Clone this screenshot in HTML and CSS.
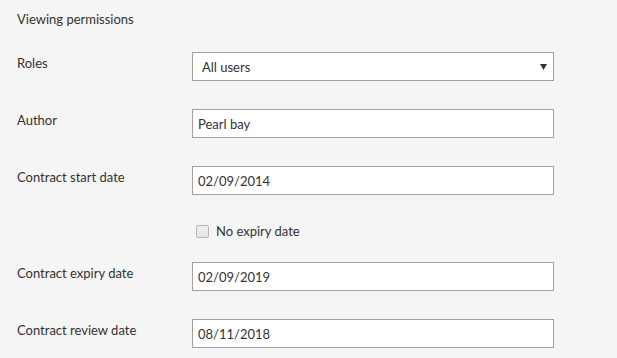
FILE: index.html
```html
<!DOCTYPE html>
<html lang="en">
<head>
    <meta charset="UTF-8">
    <meta name="viewport" content="width=device-width, initial-scale=1.0">
    <title>Viewing permissions</title>
    <link rel="stylesheet" href="styles.css">
</head>
<body>

<main class="panel">
    <h2 class="panel-title">Viewing permissions</h2>

    <form class="perm-form">
        <div class="form-row">
            <label for="roles">Roles</label>
            <div class="select-wrap">
                <select id="roles">
                    <option>All users</option>
                    <option>Admins</option>
                </select>
                <svg class="select-arrow" width="7" height="6" viewBox="0 0 7 6"><path d="M0 0H7L3.5 6Z" fill="#333"/></svg>
            </div>
        </div>

        <div class="form-row">
            <label for="author">Author</label>
            <input type="text" id="author" value="Pearl bay">
        </div>

        <div class="form-row">
            <label for="start">Contract start date</label>
            <input type="text" id="start" value="02/09/2014">
        </div>

        <div class="check-row">
            <input type="checkbox" id="noExpiry">
            <label for="noExpiry">No expiry date</label>
        </div>

        <div class="form-row">
            <label for="expiry">Contract expiry date</label>
            <input type="text" id="expiry" value="02/09/2019">
        </div>

        <div class="form-row">
            <label for="review">Contract review date</label>
            <input type="text" id="review" value="08/11/2018">
        </div>
    </form>
</main>

</body>
</html>
```

FILE: styles.css
```css
/* Reset */
* {
    margin: 0;
    padding: 0;
    box-sizing: border-box;
}

body {
    font-family: Lato, "Liberation Sans", sans-serif;
    font-size: 13px;
    background-color: #f5f5f5;
    color: #333;
}

/* Panel */
.panel {
    padding: 11px 0 0 17px;
}

.panel-title {
    font-size: 13px;
    font-weight: normal;
    line-height: 16px;
    margin-bottom: 25px;
}

/* Rows */
.form-row {
    display: flex;
    align-items: flex-start;
    margin-bottom: 28px;
}

.form-row:last-child {
    margin-bottom: 0;
}

.form-row label {
    width: 175px;
    line-height: 16px;
    padding-top: 3px;
}

.form-row input,
.form-row select {
    width: 362px;
    height: 29px;
    border: 1px solid #a0a0a0;
    border-radius: 0;
    background: #fff;
    font-family: inherit;
    font-size: 13px;
    color: #333;
    padding: 0 5px;
    outline: none;
}

/* Select */
.select-wrap {
    position: relative;
}

.select-wrap select {
    appearance: none;
    -webkit-appearance: none;
    padding-left: 9px;
}

.select-arrow {
    position: absolute;
    right: 7px;
    top: 12px;
    pointer-events: none;
}

/* Checkbox */
.check-row {
    display: flex;
    align-items: center;
    gap: 7px;
    padding-left: 179px;
    margin-top: 28px;
    margin-bottom: 23px;
    line-height: 16px;
}

.check-row input {
    appearance: none;
    -webkit-appearance: none;
    width: 13px;
    height: 13px;
    border: 1px solid #b4b4b4;
    border-radius: 2px;
    background: linear-gradient(#f0f0f0, #e4e4e4);
}
```
